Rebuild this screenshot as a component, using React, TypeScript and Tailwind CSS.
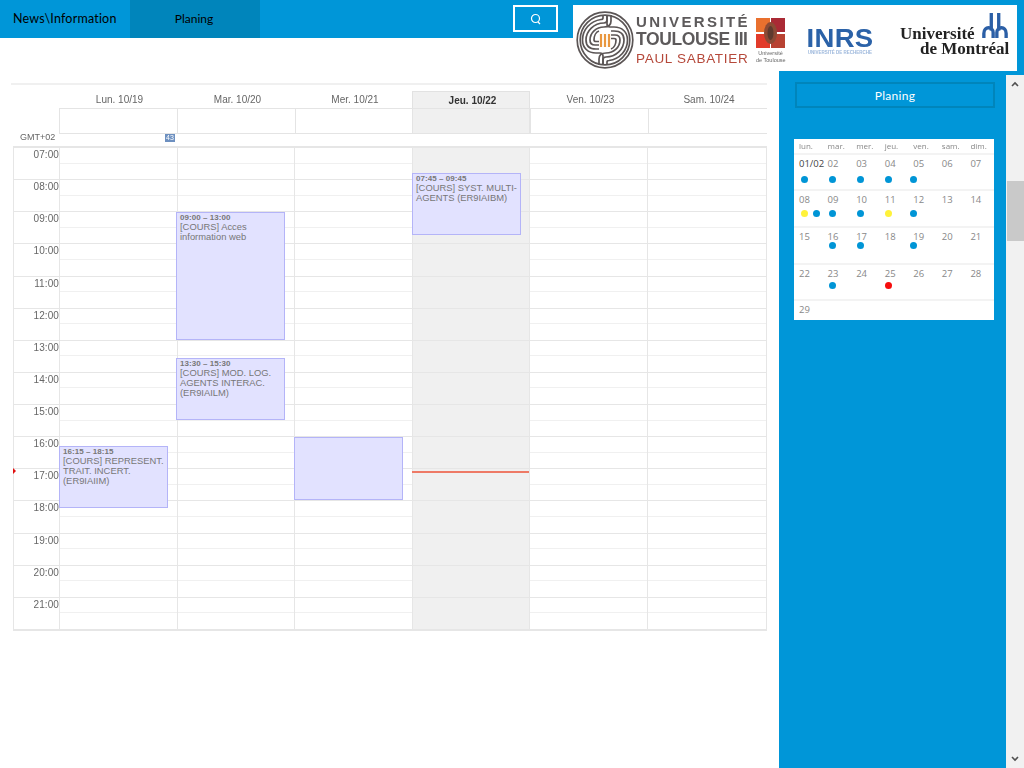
import React from "react";

const days = [
  { label: "Lun. 10/19", width: "w-[118px]" },
  { label: "Mar. 10/20", width: "w-[118px]" },
  { label: "Mer. 10/21", width: "w-[117px]" },
  { label: "Jeu. 10/22", width: "w-[118px]", today: true },
  { label: "Ven. 10/23", width: "w-[118px]" },
  { label: "Sam. 10/24", width: "w-[119px]" },
];

const hours = ["07:00", "08:00", "09:00", "10:00", "11:00", "12:00", "13:00", "14:00", "15:00", "16:00", "17:00", "18:00", "19:00", "20:00", "21:00"];

const gridCols = [
  { width: "w-[118px]" },
  { width: "w-[117px]" },
  { width: "w-[118px]" },
  { width: "w-[117px]", today: true },
  { width: "w-[118px]" },
  { width: "w-[119px]" },
];

const events = [
  { place: "left-[45px] top-[298px] w-[109px] h-[62px]", time: "16:15 – 18:15", title: ["[COURS] REPRESENT.", "TRAIT. INCERT.", "(ER9IAIIM)"] },
  { place: "left-[162px] top-[64px] w-[109px] h-[128px]", time: "09:00 – 13:00", title: ["[COURS] Acces", "information web"] },
  { place: "left-[162px] top-[210px] w-[109px] h-[62px]", time: "13:30 – 15:30", title: ["[COURS] MOD. LOG.", "AGENTS INTERAC.", "(ER9IAILM)"] },
  { place: "left-[280px] top-[289px] w-[109px] h-[63px]", time: "", title: [] },
  { place: "left-[398px] top-[25px] w-[109px] h-[62px]", time: "07:45 – 09:45", title: ["[COURS] SYST. MULTI-", "AGENTS (ER9IAIBM)"] },
];

const weekNames = ["lun.", "mar.", "mer.", "jeu.", "ven.", "sam.", "dim."];

// dot colours per cell, b = blue, y = yellow, r = red
const weeks = [
  { height: "h-[36px]", dotTop: "mt-[6px]", cells: [["01/02", "b"], ["02", "b"], ["03", "b"], ["04", "b"], ["05", "b"], ["06", ""], ["07", ""]] },
  { height: "h-[37px]", dotTop: "mt-[4px]", cells: [["08", "yb"], ["09", "b"], ["10", "b"], ["11", "y"], ["12", "b"], ["13", ""], ["14", ""]] },
  { height: "h-[37px]", dotTop: "mt-[-1px]", cells: [["15", ""], ["16", "b"], ["17", "b"], ["18", ""], ["19", "b"], ["20", ""], ["21", ""]] },
  { height: "h-[36px]", dotTop: "mt-[2px]", cells: [["22", ""], ["23", "b"], ["24", ""], ["25", "r"], ["26", ""], ["27", ""], ["28", ""]] },
];

const dotLeft = ["ml-[2px]", "ml-[1px]", "ml-[1px]", "ml-0", "ml-[-3px]", "ml-0", "ml-0"];

const dotColor: Record<string, string> = {
  b: "bg-[#0095d6]",
  y: "bg-[#fff23a]",
  r: "bg-[#f60d0d]",
};

function MazeHalf() {
  return (
    <>
      <path d="M31 4 V9 C31 11 30 12 28 12 C18 12 10 20 10 29 C10 35 14 38 20 38 H23" />
      <path d="M35 4 V10 C35 14 32 16 28 16 C20 16 14 22 14 29 C14 32 16 34 19 34 H23" />
      <path d="M27 5 V7 C27 8 26 8.5 25 8.5 C14 10 6.5 19 6.5 29 C6.5 37 12 42 20 42 H24 C26 42 27 43 27 45 V54" />
      <path d="M23 20 C20 21 18 25 18 29 C18 30 19 30.5 20 30.5 H23" />
    </>
  );
}

function UT3Mark() {
  return (
    <svg width="58" height="58" viewBox="0 0 58 58" fill="none" stroke="#5b5555" strokeWidth="1.7">
      <circle cx="29" cy="29" r="27.8" />
      <circle cx="29" cy="29" r="24.8" />
      <MazeHalf />
      <g transform="rotate(180 29 29)">
        <MazeHalf />
      </g>
      <g stroke="#e9973f" strokeWidth="2.2">
        <path d="M25 23 V36" />
        <path d="M29 23 V36" />
        <path d="M33 23 V36" />
      </g>
    </svg>
  );
}

function ToulouseSeal() {
  return (
    <svg width="29" height="30" viewBox="0 0 29 30">
      <rect width="14" height="14" fill="#e9702e" />
      <rect x="15" width="14" height="14" fill="#aa2a35" />
      <rect y="16" width="14" height="14" fill="#e23b2a" />
      <rect x="15" y="16" width="14" height="14" fill="#b84232" />
      <ellipse cx="14.5" cy="15" rx="6.5" ry="11" fill="#8c4a35" />
      <ellipse cx="14.5" cy="15" rx="3" ry="7" fill="#5e3a2e" />
    </svg>
  );
}

function MontrealMark() {
  return (
    <svg width="26" height="28" viewBox="0 0 28 28" fill="none" stroke="#2b5fa6" strokeWidth="3.6">
      <path d="M10 0 V19" />
      <path d="M18 0 V19" />
      <path d="M2 27 V22 C2 14 12 14 12 21 V27" />
      <path d="M16 27 V21 C16 14 26 14 26 22 V27" />
    </svg>
  );
}

function LogoStrip() {
  return (
    <div className="bg-white h-[66px] w-[444px] flex items-start blur-[0.4px]">
      <div className="ml-[3px] mt-[6px]">
        <UT3Mark />
      </div>
      <div className="ml-[2px] mt-[9px] w-[120px] shrink-0 font-['Liberation_Sans',sans-serif] whitespace-nowrap">
        <div className="text-[#5d5a5b] text-[15px] leading-[16px] font-bold tracking-[2.4px]">UNIVERSITÉ</div>
        <div className="text-[#5d5a5b] text-[17.5px] leading-[19px] font-bold tracking-[-0.4px]">TOULOUSE III</div>
        <div className="text-[#b5483a] text-[13.5px] leading-[17px] mt-[1px] tracking-[0.7px]">PAUL SABATIER</div>
      </div>
      <div className="mt-[13px] w-[29px] shrink-0">
        <ToulouseSeal />
        <div className="text-[#666] text-[5.5px] leading-[7px] text-center mt-[2px] font-['Liberation_Sans',sans-serif] whitespace-nowrap">
          Université
          <br />
          de Toulouse
        </div>
      </div>
      <div className="ml-[22px] mt-[21px] w-[66px] shrink-0 text-center font-['Liberation_Sans',sans-serif]">
        <div className="text-[#2b62a8] text-[25px] leading-[24px] font-bold tracking-[0.3px] scale-x-110">INRS</div>
        <div className="text-[#9db8dc] text-[4.5px] leading-[5px] font-bold whitespace-nowrap">UNIVERSITÉ DE RECHERCHE</div>
      </div>
      <div className="ml-[27px] mt-[7px] w-[112px] shrink-0 font-['Liberation_Serif',serif] text-[#222] whitespace-nowrap">
        <div className="flex items-end gap-[7px] h-[28px]">
          <span className="text-[17px] leading-[14px] font-bold mb-[-1px]">Université</span>
          <MontrealMark />
        </div>
        <div className="text-[17px] leading-[14px] font-bold ml-[20px] mt-[2px]">de Montréal</div>
      </div>
    </div>
  );
}

function Header() {
  return (
    <div className="flex h-[71px] bg-white">
      <div className="w-[573px] h-[38px] bg-[#0096d8] flex">
        <div className="w-[130px] pl-[13px] leading-[38px] text-[12.5px] text-black font-['Lato',sans-serif] tracking-[0.2px]">News\Information</div>
        <div className="w-[130px] bg-[#0085bb] text-center leading-[38px] text-[12px] text-black font-['Lato',sans-serif] pr-[2px]">Planing</div>
        <div className="ml-[253px] mt-[5px] w-[45px] h-[27px] border-2 border-white flex items-center justify-center">
          <svg width="12" height="12" viewBox="0 0 12 12" fill="none" stroke="#fff" strokeWidth="1.2">
            <circle cx="5.5" cy="5.5" r="4" />
            <path d="M8 9 L10 11" />
          </svg>
        </div>
      </div>
      <div className="flex-1 bg-[#0096d8] pt-[5px] h-[71px]">
        <LogoStrip />
      </div>
    </div>
  );
}

function Calendar() {
  return (
    <div className="ml-[11px] mt-[12px] w-[756px] border-t-2 border-[#f0f0f0] pt-[6px] font-['Liberation_Sans',sans-serif] blur-[0.3px]">
      <div className="flex pl-[48px] h-[17px]">
        {days.map((d) => (
          <div
            key={d.label}
            className={
              d.today
                ? `${d.width} pl-[3px] text-center text-[10px] leading-[17px] font-bold text-[#333] bg-[#f0f0f0] border-t border-x border-[#e2e2e2]`
                : `${d.width} pl-[3px] text-center text-[10px] leading-[17px] text-[#666]`
            }
          >
            {d.label}
          </div>
        ))}
      </div>

      {/* all day row */}
      <div className="flex ml-[48px] h-[26px] border-t border-b border-[#e4e4e4]">
        {days.map((d) => (
          <div key={d.label} className={`${d.width} border-l ${d.today ? "bg-[#f0f0f0] border-r" : ""} border-[#e4e4e4]`} />
        ))}
      </div>

      <div className="flex h-[12px]">
        <div className="w-[48px] pl-[9px] text-[9px] leading-[6px] pt-0 text-[#666]">GMT+02</div>
        <div className="w-[116px] flex justify-end">
          <div className="w-[10px] h-[8px] bg-[#6d90c0] text-white text-[7px] leading-[8px] text-center">43</div>
        </div>
      </div>

      <div className="ml-[2px] w-[754px] border-t-2 border-x border-b border-[#e6e6e6]">
        <div className="relative">
          {hours.map((h) => (
            <div key={h} className="flex h-[32.13px] border-b border-[#e6e6e6] box-border">
              <div className="w-[45px] text-right text-[10px] leading-[12px] pt-[1px] text-[#666] tracking-[0.1px]">{h}</div>
              {gridCols.map((c, i) => (
                <div key={i} className={`${c.width} border-l border-[#e6e6e6] ${c.today ? "bg-[#f0f0f0]" : ""}`}>
                  <div className="h-1/2 border-b border-[#f0f0f0]" />
                </div>
              ))}
            </div>
          ))}

          {events.map((e) => (
            <div key={e.place} className={`absolute ${e.place} bg-[#e2e2ff] border border-[#b4b4f8] pl-[3px] text-[#777]`}>
              <div className="text-[8px] leading-[9px] font-bold tracking-[0.05px]">{e.time}</div>
              {e.title.map((t) => (
                <div key={t} className="text-[9.4px] leading-[10px] whitespace-nowrap">
                  {t}
                </div>
              ))}
            </div>
          ))}

          {/* current time */}
          <div className="absolute left-[398px] top-[323px] w-[117px] h-[2px] bg-[#ee7a66]" />
          <div className="absolute left-[-1px] top-[320px] w-0 h-0 border-y-[3px] border-y-transparent border-l-[3px] border-l-[#e01010]" />
        </div>
      </div>
    </div>
  );
}

function MiniCalendar() {
  return (
    <div className="ml-[15px] mt-[31px] w-[200px] h-[181px] bg-white font-['Open_Sans',sans-serif] overflow-hidden">
      <div className="grid grid-cols-7 h-[16px] border-b-2 border-[#f3f3f3] blur-[0.3px]">
        {weekNames.map((n) => (
          <div key={n} className="pl-[5px] text-[8px] leading-[14px] text-[#888]">
            {n}
          </div>
        ))}
      </div>
      {weeks.map((w, i) => (
        <div key={i} className={`grid grid-cols-7 ${w.height} border-b-2 border-[#f3f3f3]`}>
          {w.cells.map(([num, dots], j) => (
            <div key={num} className="pl-[5px] pt-[3px]">
              <div className={`text-[9.5px] leading-[12px] whitespace-nowrap ${num === "01/02" ? "text-[#444]" : "text-[#888]"}`}>{num}</div>
              <div className={`flex gap-[5px] ${w.dotTop} ${dotLeft[j]}`}>
                {dots.split("").map((d, k) => (
                  <span key={k} className={`block w-[7px] h-[7px] rounded-full ${dotColor[d]}`} />
                ))}
              </div>
            </div>
          ))}
        </div>
      ))}
      <div className="pl-[5px] pt-[3px] text-[9.5px] leading-[12px] text-[#888]">29</div>
    </div>
  );
}

function Sidebar() {
  return (
    <div className="w-[227px] bg-[#0096d8] pt-[11px]">
      <div className="ml-[16px] w-[200px] h-[26px] border-2 border-[#0085bb] text-center text-white text-[12px] leading-[24px] font-['Lato',sans-serif] tracking-[0.3px]">Planing</div>
      <MiniCalendar />
    </div>
  );
}

function Scrollbar() {
  return (
    <div className="w-[18px] mt-[4px] bg-[#f1f1f1] flex flex-col">
      <div className="h-[18px] flex items-center justify-center">
        <svg width="8" height="6" viewBox="0 0 8 6" fill="none" stroke="#505050" strokeWidth="1.6">
          <path d="M1 5 L4 2 L7 5" />
        </svg>
      </div>
      <div className="flex-1">
        <div className="ml-[1px] mt-[88px] h-[60px] bg-[#c9c9c9]" />
      </div>
      <div className="h-[18px] flex items-center justify-center">
        <svg width="8" height="6" viewBox="0 0 8 6" fill="none" stroke="#505050" strokeWidth="1.6">
          <path d="M1 1 L4 4 L7 1" />
        </svg>
      </div>
    </div>
  );
}

export default function App() {
  return (
    <div className="w-[1024px] h-[768px] overflow-hidden bg-white flex flex-col">
      <Header />
      <div className="flex flex-1 bg-[#0096d8]">
        <div className="w-[779px] bg-white">
          <Calendar />
        </div>
        <Sidebar />
        <Scrollbar />
      </div>
    </div>
  );
}
